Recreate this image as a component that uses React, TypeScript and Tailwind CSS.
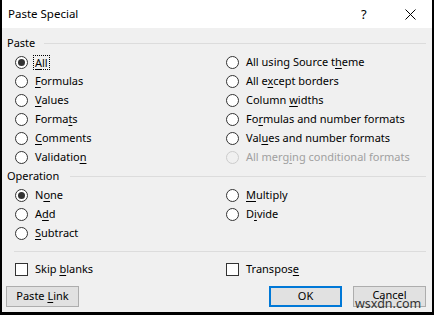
import React from "react";

const font = { fontFamily: '"Noto Sans", "Open Sans", Arial, sans-serif' };

function Radio({ checked = false, disabled = false }: { checked?: boolean; disabled?: boolean }) {
  return (
    <div
      className={`w-[13px] h-[13px] rounded-full border flex items-center justify-center shrink-0 ${
        disabled ? "border-[#cccccc] bg-[#f0f0f0]" : "border-[#333333] bg-white"
      }`}
    >
      {checked && <div className="w-[7px] h-[7px] rounded-full bg-[#333333]" />}
    </div>
  );
}

function Label({ text, u, disabled = false }: { text: string; u: number; disabled?: boolean }) {
  return (
    <span className={disabled ? "text-[#a0a0a0]" : "text-black"}>
      {text.slice(0, u)}
      <span className="underline underline-offset-2">{text.slice(u, u + 1)}</span>
      {text.slice(u + 1)}
    </span>
  );
}

function RadioRow({ text, u, checked, disabled, focus }: { text: string; u: number; checked?: boolean; disabled?: boolean; focus?: boolean }) {
  return (
    <div className="h-[19px] flex items-center gap-[7px]">
      <Radio checked={checked} disabled={disabled} />
      <span className={focus ? "border border-dotted border-black leading-[13px] px-[1px] -ml-[2px]" : ""}>
        <Label text={text} u={u} disabled={disabled} />
      </span>
    </div>
  );
}

function Header({ text, lineStart }: { text: string; lineStart: number }) {
  return (
    <div className="h-[19px] flex items-center pl-[5px] pr-[6px]">
      <span className="shrink-0" style={{ width: lineStart - 7 }}>{text}</span>
      <div className="flex-1 h-px bg-[#dcdcdc]" />
    </div>
  );
}

export default function App() {
  return (
    <div
      className="w-[434px] h-[315px] border-l-2 border-r-2 border-b-[3px] border-black flex flex-col text-[11px] text-black overflow-hidden relative"
      style={font}
    >
      <div className="h-[28px] bg-white flex items-center pl-[6px] shrink-0 relative">
        <span className="text-[11.5px]">Paste Special</span>
        <span className="absolute left-[359px] top-[5px] text-[13px]">?</span>
        <svg className="absolute left-[403px] top-[9px]" width="11" height="11" viewBox="0 0 11 11">
          <path d="M0.5 0.5 L10.5 10.5 M10.5 0.5 L0.5 10.5" stroke="#000" strokeWidth="1" />
        </svg>
      </div>
      <div className="flex-1 bg-[#f0f0f0] flex flex-col pt-[6px]">
        <Header text="Paste" lineStart={44} />
        <div className="grid grid-cols-[211px_1fr] pl-[13px]">
          <div className="flex flex-col">
            <RadioRow text="All" u={0} checked focus />
            <RadioRow text="Formulas" u={0} />
            <RadioRow text="Values" u={0} />
            <RadioRow text="Formats" u={5} />
            <RadioRow text="Comments" u={0} />
            <RadioRow text="Validation" u={9} />
          </div>
          <div className="flex flex-col">
            <RadioRow text="All using Source theme" u={18} />
            <RadioRow text="All except borders" u={5} />
            <RadioRow text="Column widths" u={7} />
            <RadioRow text="Formulas and number formats" u={2} />
            <RadioRow text="Values and number formats" u={3} />
            <RadioRow text="All merging conditional formats" u={8} disabled />
          </div>
        </div>
        <Header text="Operation" lineStart={70} />
        <div className="grid grid-cols-[211px_1fr] pl-[13px]">
          <div className="flex flex-col">
            <RadioRow text="None" u={1} checked />
            <RadioRow text="Add" u={1} />
            <RadioRow text="Subtract" u={0} />
          </div>
          <div className="flex flex-col">
            <RadioRow text="Multiply" u={0} />
            <RadioRow text="Divide" u={1} />
          </div>
        </div>
        <div className="ml-[12px] mr-[6px] mt-[8px] h-px bg-[#dcdcdc]" />
        <div className="grid grid-cols-[211px_1fr] pl-[13px] mt-[8px]">
          <div className="h-[19px] flex items-center gap-[7px]">
            <div className="w-[13px] h-[13px] border border-[#333333] bg-white" />
            <Label text="Skip blanks" u={5} />
          </div>
          <div className="h-[19px] flex items-center gap-[7px]">
            <div className="w-[13px] h-[13px] border border-[#333333] bg-white" />
            <Label text="Transpose" u={8} />
          </div>
        </div>
        <div className="flex items-center pl-[4px] mt-[7px]">
          <div className="w-[73px] h-[21px] border border-[#adadad] bg-[#e1e1e1] flex items-center justify-center">
            <Label text="Paste Link" u={6} />
          </div>
          <div className="w-[73px] h-[21px] border-2 border-[#0078d7] bg-[#e1e1e1] flex items-center justify-center ml-[190px]">
            OK
          </div>
          <div className="w-[73px] h-[21px] border border-[#adadad] bg-[#e1e1e1] flex items-center justify-center ml-[11px] pb-[3px]">
            Cancel
          </div>
        </div>
      </div>
      <span className="absolute left-[353px] top-[298px] text-[12.5px] text-[#333333] leading-none">wsxdn.com</span>
    </div>
  );
}
